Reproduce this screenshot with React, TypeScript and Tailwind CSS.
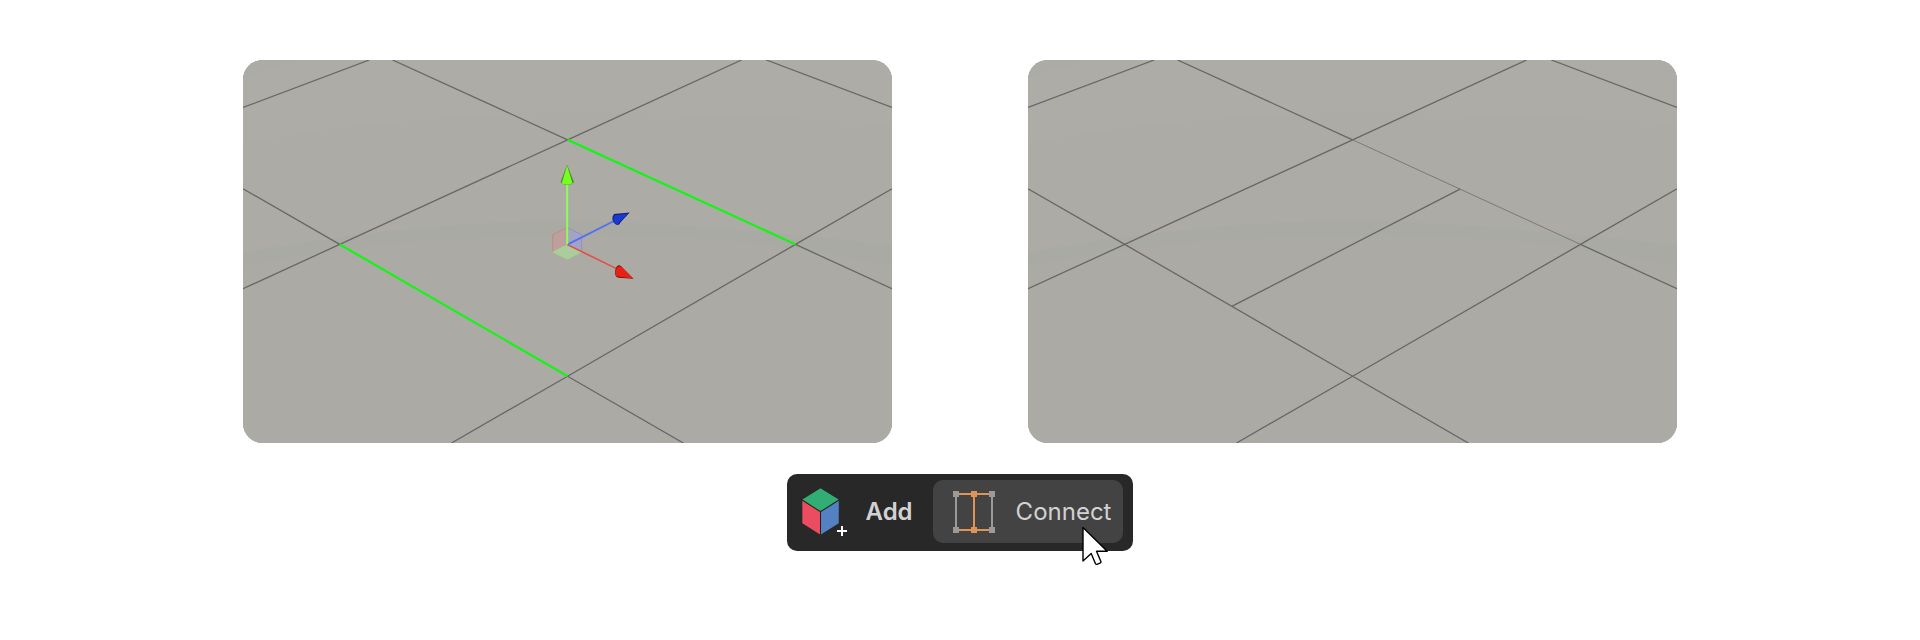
import type { ReactNode } from "react";

function Viewport({ label, children }: { label: string; children: ReactNode }) {
  return (
    <div className="overflow-hidden rounded-[20px] bg-[#abaaa5]">
      <svg viewBox="0 0 649 383" className="block h-auto w-full" role="img" aria-label={label}>
        <rect width="649" height="383" fill="#acaba6" />
        <path d="M0 0H649V64Q500 54 325 52Q130 58 0 83Z" fill="#adaca7" />
        <path d="M0 0H65Q25 8 0 17Z" fill="#abaca6" />
        <path d="M0 193Q160 163 325 160Q500 166 649 186V206Q480 170 325 176Q150 176 0 205Z" fill="#aaaaa4" />
        <path d="M0 205Q150 176 325 176Q480 170 649 206V383H0Z" fill="#abaaa5" />
        {children}
      </svg>
    </div>
  );
}

function GridLines() {
  return (
    <g stroke="#686763" strokeWidth="1.3" fill="none">
      <path d="M0 47.5L126.3 0" />
      <path d="M523.3 0L649 47.5" />
      <path d="M149.5 0L324.6 79.8" />
      <path d="M552.5 184.4L649 228.7" />
      <path d="M0 128.7L96.7 184.4" />
      <path d="M324.6 316.2L440.3 383" />
      <path d="M0 228.7L96.7 184.4L324.6 79.8L498.6 0" />
      <path d="M649 128.7L552.5 184.4L324.6 316.2L208.5 383" />
    </g>
  );
}

function Gizmo() {
  return (
    <g>
      <g strokeWidth="0.8">
        <path d="M309.7 174.7L324.3 167.5V184.6L309.7 192Z" fill="#e88" fillOpacity=".28" stroke="#c87f7b" />
        <path d="M324.3 167.5L338.7 174.7V191.8L324.3 184.6Z" fill="#99f" fillOpacity=".35" stroke="#8a8ccc" />
        <path d="M324.3 184.6L338.7 191.8L324.3 199.2L309.7 192Z" fill="#adcb9c" stroke="#9cdc80" />
      </g>
      <path d="M324.3 184.6L374 208.9" stroke="#e84c42" strokeWidth="1.6" />
      <path d="M324.3 184.6L373 160" stroke="#4f6ff8" strokeWidth="1.8" />
      <path d="M324.2 184.6V122" stroke="#8dff55" strokeWidth="2" />

      <path d="M324.1 104.8L317.5 122.2Q320 124.8 324.3 124.8Q328.8 124.8 331 122.2Z" fill="#4a8a2a" />
      <path d="M324.1 105.5L318.7 123.3Q324 125.8 329.5 123.3Z" fill="#74ff20" />

      <path d="M386.7 152.4L371 154.1Q368.8 157 369.5 160Q371 164.5 374.8 165.1Q376.8 164.8 377.4 162.5Z" fill="#0f1f70" />
      <path d="M385.3 153.6L371.6 155.2Q369.3 158.3 370.5 161.8Q372.5 164.7 374.8 164.5L377 161.6Z" fill="#1c38d2" />

      <path d="M390.5 218.8L380 208.2Q377.6 204.5 375 205.4Q371.7 207.7 372.2 213.5Q372.4 217.4 375.8 217.7Z" fill="#65120d" />
      <path d="M390 218.5L379.2 207.5Q376.4 204.8 373.7 207.7Q371.8 211.5 372.8 215.7L375.8 216.7Z" fill="#ea2014" />
    </g>
  );
}

function CubeIcon() {
  return (
    <svg viewBox="0 0 48 50" className="h-[50px] w-12 shrink-0" aria-hidden="true">
      <path d="M18.5 1L37 12.7V36.3L18.5 48L0 36.3V12.7Z" fill="#202020" />
      <path d="M18.5 1.3L36.7 12.6L18.5 24.1L0.4 12.6Z" fill="#32ad74" />
      <path d="M0.3 13.8L18 25V47.4L0.3 36.2Z" fill="#ec4c60" />
      <path d="M19 25L36.8 13.8V36.2L19 47.4Z" fill="#5481c1" />
      <path d="M35 44H45M40 39V49" stroke="#fff" strokeWidth="2" />
    </svg>
  );
}

function ConnectIcon() {
  return (
    <svg viewBox="0 0 42 42" className="size-[42px] shrink-0" aria-hidden="true">
      <path d="M3 3V39M39 3V39" stroke="#9a9a9a" strokeWidth="2" />
      <path d="M3 3H39M3 39H39M21 3V39" stroke="#df9355" strokeWidth="2" />
      <path d="M0 0h6v6H0zM36 0h6v6h-6zM0 36h6v6H0zM36 36h6v6h-6z" fill="#9a9a9a" />
      <path d="M18 0h6v6h-6zM18 36h6v6h-6z" fill="#df9355" />
    </svg>
  );
}

function Cursor() {
  return (
    <svg
      viewBox="0 0 30 42"
      className="pointer-events-none absolute right-3 -bottom-6 h-[42px] w-[30px]"
      aria-hidden="true"
    >
      <path
        d="M2 2.5V36L10.2 28.5L14.6 38.9Q15.2 39.6 16 39.3L19.4 37.9Q20.2 37.4 19.9 36.5L15.5 26.3H26.2Z"
        fill="#fff"
        stroke="#000"
        strokeWidth="1.4"
        strokeLinejoin="round"
      />
    </svg>
  );
}

export default function App() {
  return (
    <main className="flex min-h-screen flex-col items-center gap-[31px] bg-white py-[60px] font-['Inter',sans-serif]">
      <div className="grid w-full max-w-[1434px] grid-cols-2 gap-[136px]">
        <Viewport label="Two selected edges">
          <GridLines />
          <g stroke="#0bfa0b" strokeWidth="2.1">
            <path d="M324.6 79.8L552.5 184.4" />
            <path d="M96.7 184.4L324.6 316.2" />
          </g>
          <Gizmo />
        </Viewport>
        <Viewport label="Connected edges">
          <GridLines />
          <path d="M324.6 79.8L552.5 184.4" stroke="#757470" strokeWidth="0.9" />
          <path d="M96.7 184.4L324.6 316.2" stroke="#686763" strokeWidth="1.3" />
          <path d="M204.3 246.2L432 129.2" stroke="#686763" strokeWidth="1.3" />
        </Viewport>
      </div>

      <div className="flex rounded-[10px] bg-[#282828] pt-1.5 pr-2.5 pb-2 text-2xl text-[#d2d2d2]">
        <button type="button" className="flex items-center gap-4 pr-5 pl-[15px] font-semibold">
          <CubeIcon />
          Add
        </button>
        <button
          type="button"
          className="relative flex h-[63px] items-center gap-[21px] rounded-[10px] bg-[#434343] pr-3 pl-5"
        >
          <ConnectIcon />
          Connect
          <Cursor />
        </button>
      </div>
    </main>
  );
}
